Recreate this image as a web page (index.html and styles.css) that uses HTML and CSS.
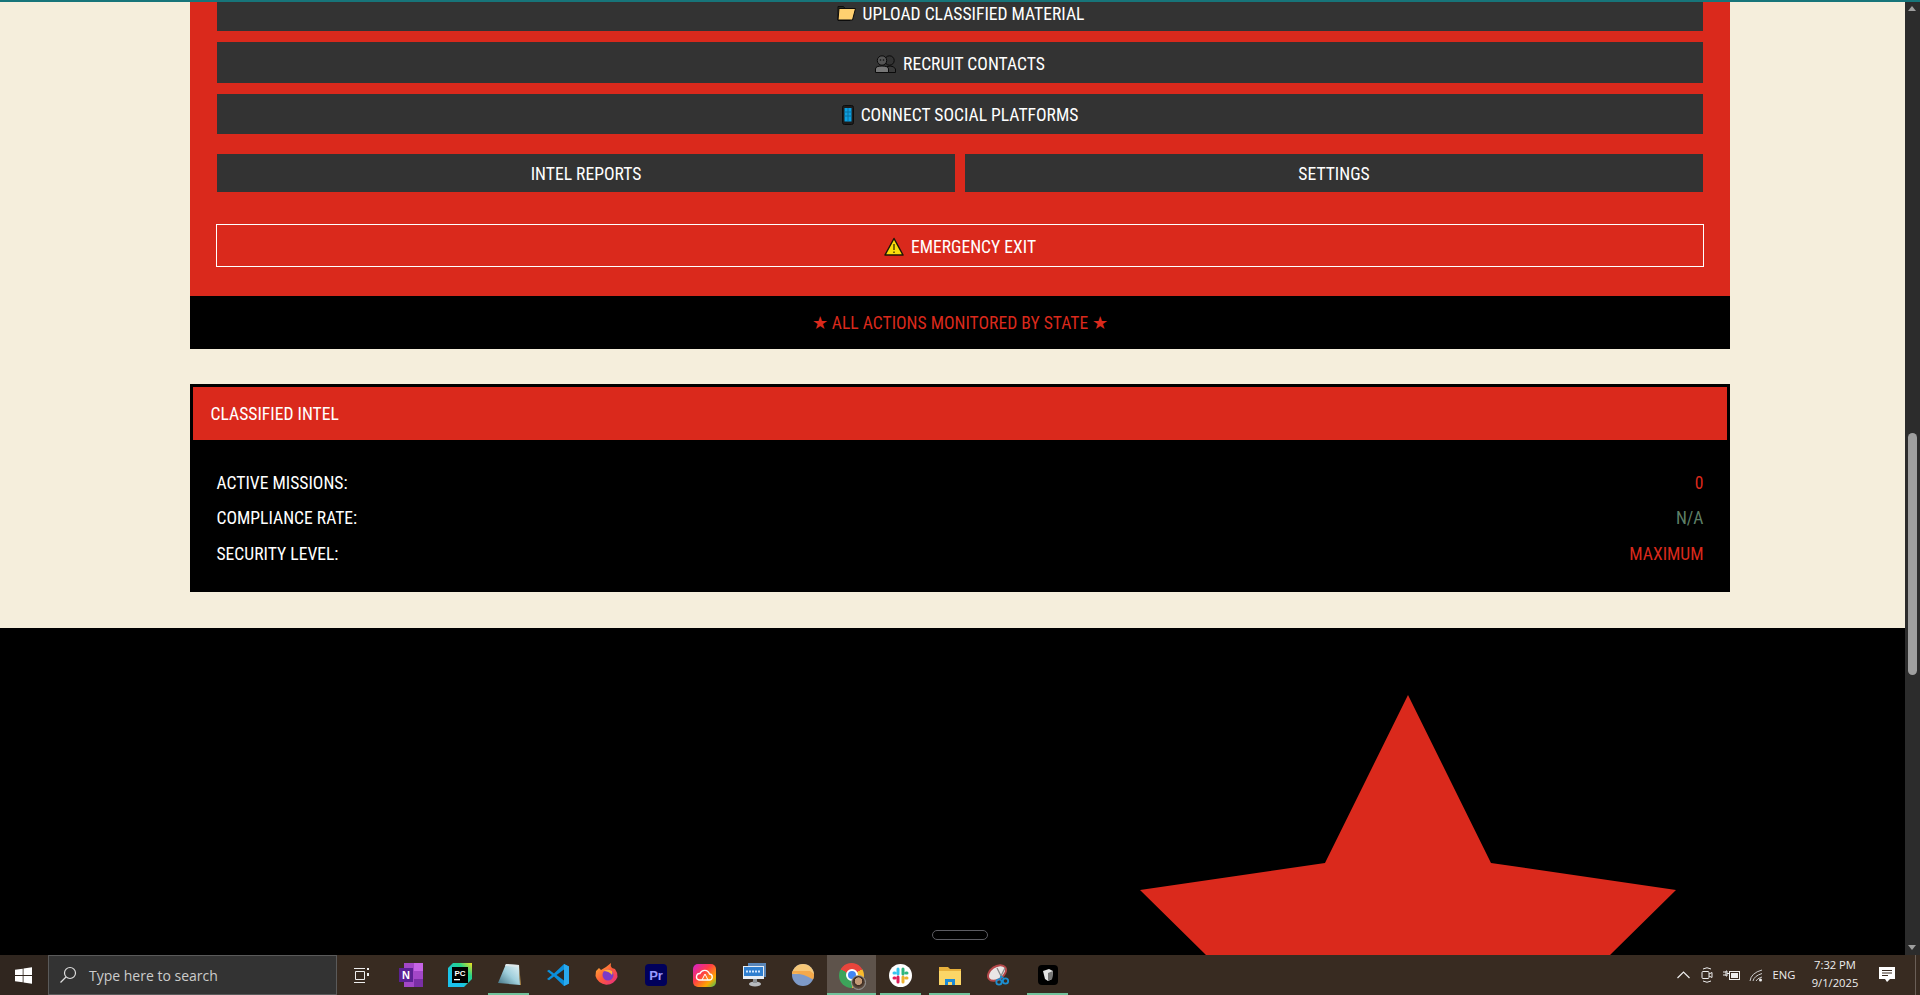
FILE: index.html
```html
<!DOCTYPE html>
<html lang="en">
<head>
    <meta charset="UTF-8">
    <title>Control Panel</title>
    <link rel="stylesheet" href="styles.css">
</head>
<body>
    <div class="topline"></div>
    <div class="window">
        <div class="viewport">
            <div class="page">
                <section class="panel">
                    <div class="panel-body">
                        <div class="actions">
                            <button class="btn">
                                <svg class="emoji" width="20" height="15" viewBox="0 0 20 15"><path d="M2 .5h5.500L9 2.500h7V5L14 14.500H2z" fill="#2a2a1e" stroke="#0c0c0c"/><path d="M3 2.500h16.500L16.500 14H2z" fill="#ffd070" stroke="#0c0c0c"/></svg>
                                <span>UPLOAD CLASSIFIED MATERIAL</span>
                            </button>
                            <button class="btn">
                                <svg class="emoji" width="21" height="18" viewBox="0 0 21 18"><circle cx="14.500" cy="5.500" r="4.700" fill="#333" stroke="#0a0a0a"/><path d="M11 17.500V14q0-3 4-3t5.500 3v3.500z" fill="#3a3a3a" stroke="#0a0a0a"/><circle cx="7" cy="5.500" r="4.700" fill="#555" stroke="#0a0a0a"/><path d="M.5 17.500V14q0-3 6.500-3t6.500 3v3.500z" fill="#777" stroke="#0a0a0a"/><circle cx="5.500" cy="5" r=".8" fill="#111"/><circle cx="8.500" cy="5" r=".8" fill="#111"/></svg>
                                <span>RECRUIT CONTACTS</span>
                            </button>
                            <button class="btn">
                                <svg class="emoji" width="12" height="20" viewBox="0 0 12 20"><rect x=".5" y=".5" width="11" height="19" rx="2" fill="#1d1d1d" stroke="#0c0c0c"/><rect x="2.500" y="3" width="7" height="13.500" fill="#0b9fe0"/><path d="M2.500 7h7M2.500 11h7M6 3v13" stroke="#0a6ea0"/></svg>
                                <span>CONNECT SOCIAL PLATFORMS</span>
                            </button>
                        </div>
                        <div class="split">
                            <button class="btn btn-low"><span>INTEL REPORTS</span></button>
                            <button class="btn btn-low"><span>SETTINGS</span></button>
                        </div>
                        <button class="btn btn-exit">
                            <svg class="emoji" width="20" height="19" viewBox="0 0 20 19"><path d="M10 1.500 19 18H1z" fill="#f9dc0b" stroke="#1c1606" stroke-width="1.500" stroke-linejoin="round"/><path d="M10 7v6M10 14.500v1.500" stroke="#3a2d00" stroke-width="1.300"/></svg>
                            <span>EMERGENCY EXIT</span>
                        </button>
                    </div>
                    <div class="panel-foot"><span>★ ALL ACTIONS MONITORED BY STATE ★</span></div>
                </section>

                <section class="intel">
                    <h3 class="intel-head"><span>CLASSIFIED INTEL</span></h3>
                    <div class="intel-body">
                        <div class="row"><span>ACTIVE MISSIONS:</span><span class="val-red">0</span></div>
                        <div class="row"><span>COMPLIANCE RATE:</span><span class="val-green">N/A</span></div>
                        <div class="row"><span>SECURITY LEVEL:</span><span class="val-red">MAXIMUM</span></div>
                    </div>
                </section>

                <footer class="footer">
                    <svg class="star" width="536" height="260" viewBox="0 0 536 260"><polygon points="268,0 351,168 536,195 470,260 66,260 0,195 185,168" fill="#da291c"/></svg>
                    <div class="pill"></div>
                </footer>
            </div>
        </div>
        <div class="scrollbar">
            <div class="arrow-up"></div>
            <div class="thumb"></div>
            <div class="arrow-down"></div>
        </div>
    </div>

    <div class="taskbar">
        <div class="start">
            <svg width="17" height="17" viewBox="0 0 17 17"><path d="M0 2.800 7.700 1.700V8H0zM8.500 1.600 17 .3V8H8.500zM0 8.900h7.700v6.400L0 14.200zM8.500 8.900H17v7.800l-8.500-1.300z" fill="#fff"/></svg>
        </div>
        <div class="search">
            <svg width="18" height="18" viewBox="0 0 18 18"><circle cx="11" cy="7" r="5.500" fill="none" stroke="#ddd" stroke-width="1.200"/><path d="M7 11 1.500 16.500" stroke="#ddd" stroke-width="1.300"/></svg>
            <span>Type here to search</span>
        </div>
        <div class="apps">
            <div class="app"><svg width="18" height="17" viewBox="0 0 18 17" fill="none" stroke="#eee"><path d="M1 1.500h11M1 15.500h11M2.500 4.500h9v8h-9z"/><path d="M15 1v2M15 6v3" stroke-width="2"/></svg></div>
            <div class="app"><svg width="26" height="26" viewBox="0 0 26 26"><rect x="6" y="1" width="19" height="24" fill="#a347c8"/><rect x="16" y="1" width="9" height="8" fill="#c664e6"/><rect x="16" y="9" width="9" height="8" fill="#a347c8"/><rect x="16" y="17" width="9" height="8" fill="#7a2fa5"/><rect x="1" y="6" width="14" height="14" fill="#5c2194"/><text x="8" y="17" class="svg-label" font-size="11" text-anchor="middle">N</text></svg></div>
            <div class="app"><svg width="26" height="26" viewBox="0 0 26 26"><defs><linearGradient id="pc" x1="0" y1="1" x2="1" y2="0"><stop offset=".3" stop-color="#1bc2ec"/><stop offset=".7" stop-color="#23d18b"/><stop offset="1" stop-color="#f3e21b"/></linearGradient></defs><path d="M6 1h19v16l-8 8H1V6z" fill="url(#pc)"/><rect x="5" y="5" width="16" height="16" fill="#000"/><text x="13" y="13.500" class="svg-label" font-size="8" text-anchor="middle">PC</text><rect x="7" y="17" width="6" height="1.300" fill="#fff"/></svg></div>
            <div class="app app-on"><svg width="26" height="26" viewBox="0 0 26 26"><defs><linearGradient id="note" x1="0" y1="1" x2="1" y2="0"><stop offset="0" stop-color="#3f6f80"/><stop offset=".5" stop-color="#9fcfdc"/><stop offset="1" stop-color="#e6f3f6"/></linearGradient></defs><path d="M10 2 23 3 24 23 2 21z" fill="url(#note)"/><path d="M23 3 25 23 24 23z" fill="#b08a4a"/><path d="M10 2 23 3 23 5 9 4z" fill="#dfe8ea"/></svg></div>
            <div class="app"><svg width="24" height="24" viewBox="0 0 24 24"><path d="M23 3.500 18 1 8 10.500 3 6.700 1 8l5 4-5 4 2 1.300 5-3.800L18 23l5-2.500z" fill="#0a8fdc"/><path d="M18 6.500 10.500 12l7.500 5.500z" fill="#2f2721"/><path d="M18 1l5 2.500v17L18 23z" fill="#29a9ee"/></svg></div>
            <div class="app"><svg width="26" height="26" viewBox="0 0 26 26"><defs><linearGradient id="fox" x1="0" y1="0" x2="1" y2="1"><stop offset="0" stop-color="#ffbb33"/><stop offset=".5" stop-color="#ff5b3a"/><stop offset="1" stop-color="#e3268a"/></linearGradient></defs><path d="M2 9 5 6l2 2 5-3 5-4q-1 3 1 5l3 1q3 4 2.500 8A11.500 11.500 0 0 1 1.500 14z" fill="url(#fox)"/><circle cx="14" cy="13" r="5.500" fill="#7b3bc8"/><path d="M9 9q5-3 9 0 1 2 0 4-3-4-9-4z" fill="#ffb037"/></svg></div>
            <div class="app"><svg width="22" height="22" viewBox="0 0 22 22"><rect width="22" height="22" rx="4" fill="#00005b"/><text x="11" y="16" class="svg-label svg-pr" font-size="13" text-anchor="middle">Pr</text></svg></div>
            <div class="app"><svg width="23" height="23" viewBox="0 0 23 23"><defs><linearGradient id="cc" x1="0" y1="0" x2="1" y2="1"><stop offset="0" stop-color="#d31fd0"/><stop offset=".4" stop-color="#ff3a4a"/><stop offset=".75" stop-color="#ffa800"/><stop offset="1" stop-color="#3ac25c"/></linearGradient></defs><rect width="23" height="23" rx="5" fill="url(#cc)"/><path d="M6 16h10a3 3 0 0 0 .5-6A5 5 0 0 0 7 9.500 3.300 3.300 0 0 0 6 16z" fill="none" stroke="#fff" stroke-width="1.300"/><path d="M9 16l3-6 3 6" fill="none" stroke="#fff" stroke-width="1"/></svg></div>
            <div class="app"><svg width="26" height="26" viewBox="0 0 26 26"><rect x="7" y="1" width="18" height="14" fill="#5a86b8"/><rect x="2" y="4" width="21" height="13" fill="#e8eef5"/><rect x="3" y="5" width="19" height="9" fill="#2f7fd0"/><path d="M5 9.500h15" stroke="#cfe6ff" stroke-dasharray="2 1" stroke-width="2"/><ellipse cx="14" cy="22" rx="6" ry="2.500" fill="#b8bcc0"/><rect x="12" y="17" width="4" height="4" fill="#8d9296"/></svg></div>
            <div class="app"><svg width="22" height="22" viewBox="0 0 22 22"><defs><clipPath id="ph"><circle cx="11" cy="11" r="11"/></clipPath></defs><g clip-path="url(#ph)"><rect width="22" height="22" fill="#7e9ac8"/><rect width="22" height="10" fill="#f6c778"/><path d="M0 10Q8 8 22 16V10L18 7H0z" fill="#f4a94b"/></g></svg></div>
            <div class="app app-active"><div class="chrome"><div class="chrome-dot"></div></div><div class="avatar"></div></div>
            <div class="app app-on"><svg width="23" height="23" viewBox="0 0 23 23"><circle cx="11.500" cy="11.500" r="11.500" fill="#fff"/><g stroke-width="3" stroke-linecap="round"><path d="M9 5v5M5 9h1" stroke="#36c5f0"/><path d="M14 5v5M18 9h-1" stroke="#2eb67d"/><path d="M14 18v-5M18 14h-1" stroke="#ecb22e"/><path d="M9 18v-5M5 14h1" stroke="#e01e5a"/></g></svg></div>
            <div class="app app-on"><svg width="22" height="20" viewBox="0 0 22 20"><path d="M0 2h9l2 2h11v16H0z" fill="#e8b13c"/><rect y="6" width="22" height="14" fill="#fcd667"/><path d="M6 20v-6h10v6h-3v-3H9v3z" fill="#1d8ad6"/></svg></div>
            <div class="app"><svg width="24" height="24" viewBox="0 0 24 24"><ellipse cx="10" cy="10" rx="10" ry="6.500" transform="rotate(-35 10 10)" fill="#e9e6e6" stroke="#b5484a" stroke-width="2"/><path d="M10 5 14 13M18 5l-4 8" stroke="#888" stroke-width="1.300"/><circle cx="12" cy="19" r="2.700" fill="none" stroke="#1c8ed0" stroke-width="1.800"/><circle cx="18.500" cy="18" r="2.700" fill="none" stroke="#1c8ed0" stroke-width="1.800"/><path d="M14 13l-1 4M14 13l3 3" stroke="#1c8ed0" stroke-width="1.500"/></svg></div>
            <div class="app app-on"><svg width="20" height="20" viewBox="0 0 20 20"><rect width="20" height="20" rx="4" fill="#000"/><path d="M5 6l6-2 4 2-1 8-4 2-3-2z" fill="#e5e5e5"/><path d="M10 8l5-2-1 8-4 2z" fill="#777"/></svg></div>
        </div>
        <div class="tray">
            <svg class="tray-chevron" width="13" height="8" viewBox="0 0 13 8"><path d="M.5 7 6.500 1l6 6" fill="none" stroke="#eee" stroke-width="1.200"/></svg>
            <svg class="tray-cam" width="12" height="18" viewBox="0 0 12 18" fill="none" stroke="#eee"><path d="M2 3q4-2.500 8 0M2 15q4 2.500 8 0"/><rect x="1" y="5.500" width="7" height="7" rx="1"/><path d="M8 8l3-1.500v5L8 10"/></svg>
            <svg class="tray-batt" width="17" height="11" viewBox="0 0 17 11"><path d="M0 2h3M0 5h3M3 1v5h1V1zM4 3.500h2" stroke="#eee"/><rect x="6.500" y="1.500" width="10" height="8" fill="none" stroke="#eee"/><rect x="8" y="3" width="7" height="5" fill="#eee"/></svg>
            <svg class="tray-wifi" width="14" height="13" viewBox="0 0 14 13" fill="none" stroke="#ccc"><path d="M1 12Q2 4 13 1M4 12q1-5 9-7.500M7 12q1-2.500 6-4"/><circle cx="11.500" cy="11" r="1.500" fill="#eee" stroke="none"/></svg>
            <span class="tray-lang">ENG</span>
            <div class="clock"><span>7:32 PM</span><span>9/1/2025</span></div>
            <svg class="tray-note" width="16" height="16" viewBox="0 0 16 16"><path d="M0 0h16v12h-5l-3 3-2-3H0z" fill="#fff"/><path d="M3 3.500h10M3 6h10M3 8.500h6" stroke="#3a2c22"/></svg>
            <div class="tray-edge"></div>
        </div>
    </div>
</body>
</html>
```

FILE: styles.css
```css
* { box-sizing: border-box; }
html, body { margin: 0; height: 995px; overflow: hidden; }
body { display: flex; flex-direction: column; background: #000; font-family: "Roboto", "Liberation Sans", sans-serif; color: #fff; }

.topline { height: 2px; background: #17757a; flex: none; }
.window { flex: 1; display: flex; min-height: 0; }
.viewport { flex: 1; overflow: hidden; background: #f5eedc; }
.page { margin-top: -8px; }

/* red control panel */
.panel { width: 1540px; margin-left: 190px; }
.panel-body { background: #da291c; padding: 0 27px 29px; }
.actions { display: flex; flex-direction: column; gap: 11px; }
.btn { display: flex; align-items: center; justify-content: center; gap: 7px; width: 100%; height: 41px; padding: 2px 0 0; border: none; background: #333; color: #fff; font-family: inherit; font-size: 17.6px; font-weight: 450; font-stretch: 75%; }
.actions .btn:first-child { height: 37px; }
.actions .btn:last-child { height: 40px; }
.split { display: grid; grid-template-columns: 1fr 1fr; gap: 10px; margin-top: 20px; }
.btn-low { height: 38px; }
.btn-exit { margin: 32px -1px 0; width: calc(100% + 2px); height: 43px; background: #da291c; border: 1px solid #fff; }
.emoji { flex: none; }
.panel-foot { height: 53px; display: flex; align-items: center; justify-content: center; background: #000; color: #da291c; font-size: 17.6px; font-weight: 450; font-stretch: 75%; }

/* intel card */
.intel { width: 1540px; margin: 35px 0 36px 190px; border: 3px solid #000; background: #000; }
.intel-head { margin: 0; height: 53px; padding-left: 17.5px; display: flex; align-items: center; background: #da291c; font-size: 17.6px; font-weight: 450; font-stretch: 75%; }
.intel-body { padding: 25px 23.5px 17.5px; }
.row { display: flex; justify-content: space-between; align-items: center; height: 35.5px; font-size: 17.6px; font-weight: 450; font-stretch: 75%; }
.val-red { color: #da291c; }
.val-green { color: #5d7f66; }

/* black footer */
.footer { position: relative; height: 340px; background: #000; }
.star { position: absolute; left: 1140px; top: 67px; }
.pill { position: absolute; left: 932px; top: 302px; width: 56px; height: 10px; border: 1px solid #5c5c62; border-radius: 5px; }

/* scrollbar */
.scrollbar { position: relative; width: 15px; flex: none; background: #2c2c2c; }
.thumb { position: absolute; left: 3px; top: 431px; width: 9px; height: 242px; border-radius: 5px; background: #9f9f9f; }
.arrow-up, .arrow-down { position: absolute; left: 3px; border-left: 4.5px solid transparent; border-right: 4.5px solid transparent; }
.arrow-up { top: 4px; border-bottom: 5px solid #9f9f9f; }
.arrow-down { bottom: 5px; border-top: 5px solid #9f9f9f; }

/* windows taskbar */
.taskbar { height: 40px; flex: none; display: flex; align-items: center; background: #382b21; font-family: "Open Sans", "Noto Sans", sans-serif; }
.start { width: 48px; height: 40px; display: flex; align-items: center; justify-content: center; padding-right: 2px; background: #30261f; }
.search { width: 289px; height: 40px; display: flex; align-items: center; gap: 12px; padding-left: 10px; background: #333; border: 1px solid #5a5a5a; color: #ccc; font-size: 14px; }
.apps { display: flex; }
.app { position: relative; width: 49px; height: 40px; display: flex; align-items: center; justify-content: center; }
.app-on::after, .app-active::after { content: ""; position: absolute; left: 4px; right: 4px; bottom: 0; height: 2px; background: #70c29b; }
.app-active { background: #5e534b; }
.app-active::after { left: 0; right: 0; }
.svg-label { fill: #fff; font-family: "Liberation Sans", sans-serif; font-weight: 700; }
.svg-pr { fill: #9999ff; }
.chrome { width: 25px; height: 25px; border-radius: 50%; display: flex; align-items: center; justify-content: center; background: conic-gradient(#e8453c 0 16.6%, #f9bb2d 16.6% 50%, #3da35a 50% 83.3%, #e8453c 83.3%); }
.chrome-dot { width: 12px; height: 12px; border-radius: 50%; background: #4285f4; border: 2px solid #fff; }
.avatar { position: absolute; left: 24px; top: 20px; width: 15px; height: 15px; border-radius: 50%; background: radial-gradient(circle at 50% 40%, #c39a76 0 35%, #3b2a20 40%, #6b5a4d 75%); border: 1px solid #999; }

.tray { position: relative; flex: 1; height: 40px; color: #eee; }
.tray > * { position: absolute; }
.tray-chevron { left: 605px; top: 16px; }
.tray-cam { left: 629px; top: 11px; }
.tray-batt { left: 651px; top: 15px; }
.tray-wifi { left: 677px; top: 14px; }
.tray-lang { left: 692px; width: 40px; top: 0; line-height: 40px; text-align: center; font-size: 11.2px; }
.clock { left: 728px; width: 70px; top: 1px; display: flex; flex-direction: column; align-items: center; font-size: 11.2px; line-height: 18px; }
.tray-note { left: 807px; top: 12px; }
.tray-edge { left: 843px; top: 0; width: 1px; height: 40px; background: #6a5f57; }
```
